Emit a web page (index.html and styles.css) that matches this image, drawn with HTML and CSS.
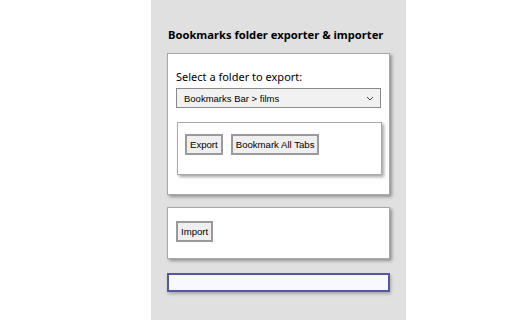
FILE: index.html
```html
<!DOCTYPE html>
<html>
<head>
<meta charset="utf-8">
<link rel="stylesheet" href="styles.css">
</head>
<body>
<main class="panel">
  <h1 class="title">Bookmarks folder exporter &amp; importer</h1>
  <section class="card export-card">
    <label class="label" for="folder">Select a folder to export:</label>
    <div class="select">
      <span class="select-text">Bookmarks Bar &gt; films</span>
      <svg class="chev" width="8" height="5" viewBox="0 0 8 5"><path d="M1 1 L4 4 L7 1" fill="none" stroke="#444" stroke-width="1"/></svg>
    </div>
    <div class="card inner-card">
      <button class="btn">Export</button>
      <button class="btn">Bookmark All Tabs</button>
    </div>
  </section>
  <section class="card import-card">
    <button class="btn">Import</button>
  </section>
  <div class="status"></div>
</main>
</body>
</html>
```

FILE: styles.css
```css
html, body {
  margin: 0;
  padding: 0;
  height: 100%;
  background: #ffffff;
}
body {
  display: flex;
}
.panel {
  margin-left: 151px;
  width: 255px;
  min-height: 100%;
  background: #e0e0e0;
  box-sizing: border-box;
  padding: 0 16px 0 16px;
  font-family: "Liberation Sans", Arial, sans-serif;
  color: #000;
}
.title {
  font-family: "Noto Sans", "Liberation Sans", sans-serif;
  font-size: 11.2px;
  font-weight: bold;
  line-height: 14px;
  margin: 28px 0 11px 1px;
  white-space: nowrap;
}
.card {
  background: #ffffff;
  border: 1px solid #a8a8a8;
  box-shadow: 2px 2px 3px rgba(0,0,0,0.35);
  box-sizing: border-box;
}
.export-card {
  width: 223px;
  height: 142px;
  padding: 16px 8px 0 8px;
}
.label {
  display: block;
  font-family: "Noto Sans", "Liberation Sans", sans-serif;
  font-size: 11px;
  line-height: 14px;
  margin-bottom: 4px;
}
.select {
  width: 205px;
  height: 20px;
  box-sizing: border-box;
  border: 1px solid #8a8a8a;
  background: #f1f1f1;
  display: flex;
  align-items: center;
  justify-content: space-between;
  padding: 0 6px 0 7px;
  font-size: 9.5px;
}
.chev {
  display: block;
}
.inner-card {
  margin: 14px 0 0 1px;
  width: 205px;
  height: 53px;
  padding: 11px 7px 0 7px;
  display: flex;
  align-items: flex-start;
  gap: 8px;
}
.btn {
  font-family: "Liberation Sans", Arial, sans-serif;
  font-size: 9.6px;
  height: 21px;
  padding: 0 3px;
  background: #efefef;
  border: 2px solid #9a9a9a;
  color: #000;
  margin: 0;
}
.import-card {
  margin-top: 12px;
  width: 223px;
  height: 52px;
  padding: 13px 8px 0 8px;
}
.status {
  margin-top: 14px;
  width: 223px;
  height: 19px;
  box-sizing: border-box;
  border: 2px solid #5656a2;
  background: #f8f8ff;
  box-shadow: 1px 2px 3px rgba(0,0,0,0.25);
}
```
